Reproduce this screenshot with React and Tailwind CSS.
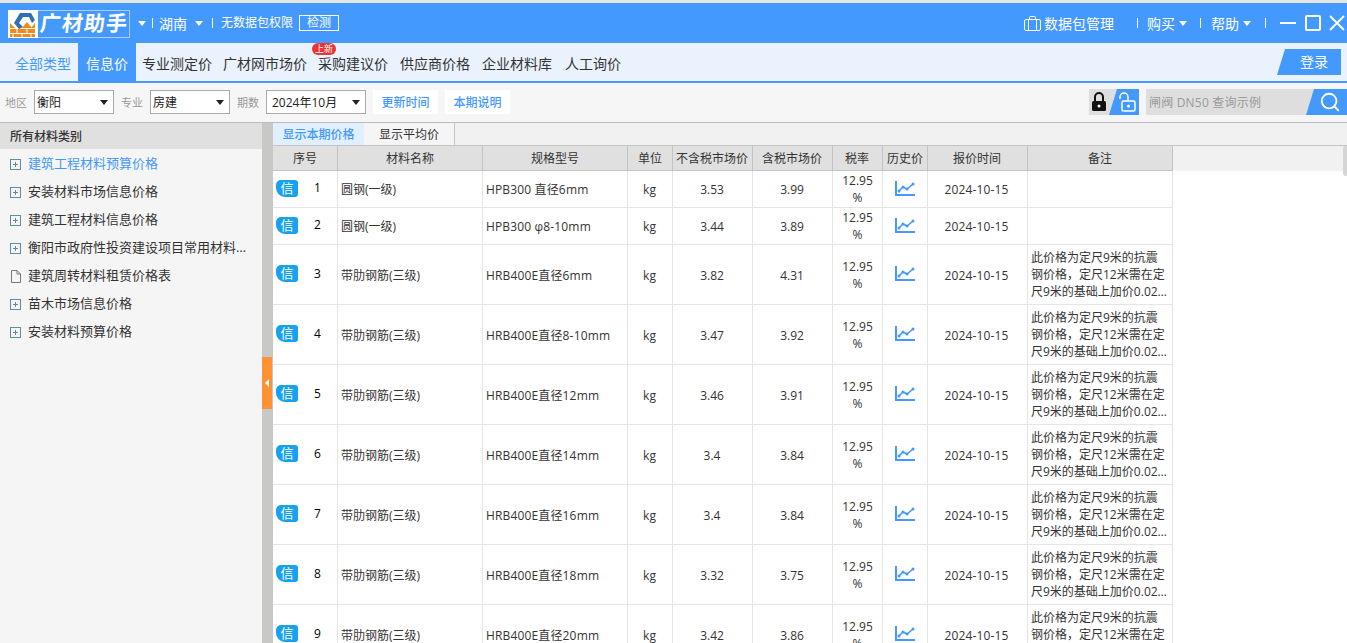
import { Search } from 'lucide-react';

const CATEGORIES = [
  { name: '建筑工程材料预算价格', active: true },
  { name: '安装材料市场信息价格' },
  { name: '建筑工程材料信息价格' },
  { name: '衡阳市政府性投资建设项目常用材料价格表' },
  { name: '建筑周转材料租赁价格表', file: true },
  { name: '苗木市场信息价格' },
  { name: '安装材料预算价格' },
];

const NAV = [
  { label: '专业测定价', gap: 'ml-[6px]' },
  { label: '广材网市场价', gap: 'ml-[11px]' },
  { label: '采购建议价', gap: 'ml-[11px]', isNew: true },
  { label: '供应商价格', gap: 'ml-[12px]' },
  { label: '企业材料库', gap: 'ml-[12px]' },
  { label: '人工询价', gap: 'ml-[13px]' },
];

const NOTE = '此价格为定尺9米的抗震钢价格，定尺12米需在定尺9米的基础上加价0.02元/公斤计算';

const ROWS = [
  { id: 1, name: '圆钢(一级)', spec: 'HPB300 直径6mm', ex: '3.53', inc: '3.99' },
  { id: 2, name: '圆钢(一级)', spec: 'HPB300 φ8-10mm', ex: '3.44', inc: '3.89' },
  { id: 3, name: '带肋钢筋(三级)', spec: 'HRB400E直径6mm', ex: '3.82', inc: '4.31', note: true },
  { id: 4, name: '带肋钢筋(三级)', spec: 'HRB400E直径8-10mm', ex: '3.47', inc: '3.92', note: true },
  { id: 5, name: '带肋钢筋(三级)', spec: 'HRB400E直径12mm', ex: '3.46', inc: '3.91', note: true },
  { id: 6, name: '带肋钢筋(三级)', spec: 'HRB400E直径14mm', ex: '3.4', inc: '3.84', note: true },
  { id: 7, name: '带肋钢筋(三级)', spec: 'HRB400E直径16mm', ex: '3.4', inc: '3.84', note: true },
  { id: 8, name: '带肋钢筋(三级)', spec: 'HRB400E直径18mm', ex: '3.32', inc: '3.75', note: true },
  { id: 9, name: '带肋钢筋(三级)', spec: 'HRB400E直径20mm', ex: '3.42', inc: '3.86', note: true },
];

const COLS = [
  ['序号', 'w-[65px]'],
  ['材料名称', 'w-[145px]'],
  ['规格型号', 'w-[145px]'],
  ['单位', 'w-[45px]'],
  ['不含税市场价', 'w-[80px] pr-px'],
  ['含税市场价', 'w-[80px] pr-px'],
  ['税率', 'w-[50px] pr-px'],
  ['历史价', 'w-[45px]'],
  ['报价时间', 'w-[100px] pr-px'],
  ['备注', 'w-[145px]'],
];

function Caret({ className = 'border-t-white' }) {
  return <span className={`block w-0 h-0 border-x-[4px] border-x-transparent border-t-[5px] ${className}`} />;
}

function Sep() {
  return <span className="block w-px h-[10px] bg-white" />;
}

function Logo() {
  return (
    <div className="flex h-[28px] ml-[8px] mt-px">
      <svg width="30" height="28" viewBox="0 0 30 28" className="bg-white">
        <path d="M12 3 H23 L27 10 L24 13 L21 7 H15 L11 13 L15 17 L11 19 L6 13 Z" fill="#2f6fb8" />
        <path d="M19 12 L24 18 H14 Z" fill="#f08a1d" />
        <path d="M2 13 L7 18 H2 Z M27 13 V18 H23 Z" fill="#f08a1d" />
        <path d="M2 19 H27 V23 H2 Z M2 24 H27 V27 H2 Z" fill="#f08a1d" />
        <path d="M9 19 V23 M19 19 V23 M14 24 V27 M5 24 V27 M23 24 V27" stroke="#fff" />
      </svg>
      <div className="w-[92px] border border-l-0 border-[#a9cdf5] flex items-center justify-center text-white">
        <span className="block text-[21px] font-bold tracking-[1px] leading-none -skew-x-6">广材助手</span>
      </div>
    </div>
  );
}

function TitleBar() {
  return (
    <div className="h-[40px] bg-[#4499ff] flex items-center text-white shrink-0">
      <Logo />
      <span className="ml-[8px]"><Caret /></span>
      <span className="ml-[6px]"><Sep /></span>
      <span className="ml-[6px] text-[14px]">湖南</span>
      <span className="ml-[8px]"><Caret /></span>
      <span className="ml-[9px]"><Sep /></span>
      <span className="ml-[8px] text-[12px]">无数据包权限</span>
      <span className="ml-[6px] w-[40px] h-[16px] border border-white text-[12px] leading-[14px] text-center">检测</span>
      <div className="flex-1" />
      <svg width="17" height="15" viewBox="0 0 17 15" fill="none" stroke="#fff" strokeWidth="1">
        <rect x="0.5" y="3.5" width="16" height="11" rx="1.5" />
        <path d="M4.5 3.5 V14.5 M12.5 3.5 V14.5 M5.5 3.5 V1.5 Q5.5 0.5 6.5 0.5 H10.5 Q11.5 0.5 11.5 1.5 V3.5" />
      </svg>
      <span className="ml-[3px] text-[14px]">数据包管理</span>
      <span className="ml-[23px]"><Sep /></span>
      <span className="ml-[9px] text-[14px]">购买</span>
      <span className="ml-[4px]"><Caret /></span>
      <span className="ml-[13px]"><Sep /></span>
      <span className="ml-[10px] text-[14px]">帮助</span>
      <span className="ml-[4px]"><Caret /></span>
      <span className="ml-[14px]"><Sep /></span>
      <span className="ml-[14px] w-[16px] h-[2px] bg-white" />
      <span className="ml-[9px] w-[16px] h-[16px] border-2 border-white rounded-[2px]" />
      <svg className="ml-[8px] mr-[2px]" width="16" height="16" viewBox="0 0 16 16" stroke="#fff" strokeWidth="1.8">
        <path d="M1 1 L15 15 M15 1 L1 15" />
      </svg>
    </div>
  );
}

function NavBar() {
  return (
    <div className="h-[40px] bg-[#eaf2fe] border-b-2 border-[#4499ff] flex text-[14px] leading-none text-[#333] shrink-0">
      <div className="w-[78px] flex items-center justify-end pr-[7px] pt-[3px] text-[#4499ff]">全部类型</div>
      <div className="w-[58px] flex items-center justify-center pt-[3px] bg-[#4499ff] text-white">信息价</div>
      {NAV.map(item => (
        <div key={item.label} className={`relative flex items-center pt-[3px] ${item.gap}`}>
          {item.label}
          {item.isNew && (
            <span className="absolute left-[-6px] top-0 w-[24px] h-[12px] rounded-full bg-[#ee3333] text-white text-[9px] leading-[12px] text-center">上新</span>
          )}
        </div>
      ))}
      <div className="flex-1" />
      <div className="w-[64px] h-[26px] mt-[6px] mr-[6px] bg-[#4499ff] text-white flex items-center justify-center pl-[10px] [clip-path:polygon(8px_0,100%_0,100%_100%,0_100%)]">
        登录
      </div>
    </div>
  );
}

function FakeSelect({ value, width }) {
  return (
    <div className={`${width} h-[24px] bg-white border border-[#aaaaaa] flex items-center justify-between pl-[2px] pr-[5px] text-[12px] text-[#222]`}>
      <span className="pt-px">{value}</span>
      <Caret className="border-t-[#222]" />
    </div>
  );
}

function FilterBar() {
  return (
    <div className="h-[40px] pb-px bg-[#f6f6f6] border-b border-[#bbbbbb] flex items-center text-[11px] text-[#999] shrink-0">
      <span className="ml-[5px] w-[29px] pt-[2px]">地区</span>
      <FakeSelect value="衡阳" width="w-[80px]" />
      <span className="ml-[7px] w-[29px] pt-[2px]">专业</span>
      <FakeSelect value="房建" width="w-[80px]" />
      <span className="ml-[7px] w-[29px] pt-[2px]">期数</span>
      <FakeSelect value={<span className="pl-[3px]">2024年10月</span>} width="w-[100px]" />
      <button className="ml-[7px] w-[65px] h-[24px] pt-[2px] bg-white text-[#4499ff] text-[12px] font-medium">更新时间</button>
      <button className="ml-[7px] w-[65px] h-[24px] pt-[2px] bg-white text-[#4499ff] text-[12px] font-medium">本期说明</button>
      <div className="flex-1" />
      <div className="w-[50px] h-[26px] bg-[#dedede] flex">
        <div className="w-[20px] flex items-center justify-center">
          <svg width="16" height="20" viewBox="0 0 16 20">
            <path d="M4 9 V5 a4 4 0 0 1 8 0 V9" fill="none" stroke="#111" strokeWidth="2" />
            <rect x="1" y="9" width="14" height="10" rx="1.5" fill="#111" />
            <circle cx="8" cy="14" r="1.5" fill="#fff" />
          </svg>
        </div>
        <div className="flex-1 bg-[#4499ff] flex items-center justify-center pl-[6px] [clip-path:polygon(8px_0,100%_0,100%_100%,0_100%)]">
          <svg width="18" height="20" viewBox="0 0 18 20">
            <path d="M2 7 V5 a4 4 0 0 1 8 0 V9" fill="none" stroke="#fff" strokeWidth="1.5" />
            <rect x="4" y="9" width="13" height="10" rx="1.5" fill="none" stroke="#fff" strokeWidth="1.5" />
            <circle cx="10.5" cy="14" r="1.5" fill="#fff" />
          </svg>
        </div>
      </div>
      <div className="ml-[7px] w-[201px] h-[26px] bg-[#dedede] flex items-center">
        <span className="flex-1 pl-[3px] pt-[2px] text-[12px] tracking-[0.2px] text-[#999]">闸阀 DN50 查询示例</span>
        <div className="w-[41px] h-full bg-[#4499ff] flex items-center justify-center pl-[7px] [clip-path:polygon(8px_0,100%_0,100%_100%,0_100%)]">
          <Search size={22} color="#fff" strokeWidth={2} />
        </div>
      </div>
    </div>
  );
}

function Sidebar() {
  return (
    <div className="w-[262px] bg-[#f5f5f5] shrink-0">
      <div className="h-[26px] pt-[2px] bg-[#e0e0e0] flex items-center pl-[10px] text-[12px] font-medium text-[#333]">所有材料类别</div>
      <div className="pt-px">
        {CATEGORIES.map(c => (
          <div key={c.name} className={`h-[28px] flex items-center pl-[10px] text-[13px] leading-[20px] ${c.active ? 'text-[#4499ff]' : 'text-[#333]'}`}>
            {c.file ? (
              <svg width="11" height="13" viewBox="0 0 11 13" fill="none" stroke="#777">
                <path d="M1.5 0.5 H7 L10.5 4 V12.5 H1.5 Z M7 0.5 V4 H10.5" />
              </svg>
            ) : (
              <svg width="11" height="11" viewBox="0 0 11 11" fill="none" stroke="#5f8ba3">
                <rect x="0.5" y="0.5" width="10" height="10" />
                <path d="M3 5.5 H8 M5.5 3 V8" />
              </svg>
            )}
            <span className="ml-[7px] -mt-[2px] w-[222px] truncate">{c.name}</span>
          </div>
        ))}
      </div>
    </div>
  );
}

function Gutter() {
  return (
    <div className="w-[11px] bg-[#c8c8c6] flex items-center shrink-0">
      <div className="w-[10px] h-[52px] bg-[#ff9233] flex items-center justify-center">
        <span className="w-0 h-0 border-y-[4px] border-y-transparent border-r-[4px] border-r-white" />
      </div>
    </div>
  );
}

function TrendIcon() {
  return (
    <svg width="20" height="15" viewBox="0 0 20 15" fill="none" stroke="#4499ff" className="mx-auto -translate-y-px">
      <path d="M1 0 V14 H20" strokeWidth="2" />
      <path d="M4 10 L8 6 L12 8 L18 3" strokeWidth="1.5" />
      <g fill="#4499ff" stroke="none">
        <circle cx="4" cy="10" r="1.5" />
        <circle cx="8" cy="6" r="1.5" />
        <circle cx="12" cy="8" r="1.5" />
        <circle cx="18" cy="3" r="1.5" />
      </g>
    </svg>
  );
}

function PriceTable() {
  return (
    <table className="table-fixed border-separate border-spacing-0 w-[900px] text-[12px] text-[#333] bg-white">
      <thead>
        <tr className="h-[25px]">
          {COLS.map(([title, w]) => (
            <th key={title} className={`${w} pt-px bg-[#e0e0e0] border-r border-b border-[#c4c4c4] font-normal whitespace-nowrap overflow-hidden`}>{title}</th>
          ))}
        </tr>
      </thead>
      <tbody>
        {ROWS.map(r => (
          <tr key={r.id} className={r.note ? 'h-[60px]' : 'h-[37px]'}>
            <td className="border-r border-b border-[#e5e5e5] pl-[3px]">
              <div className="flex items-center -translate-y-px">
                <span className="w-[22px] h-[17px] bg-[#17a1ee] text-white text-[13px] leading-[17px] text-center rounded-tl-[5px] rounded-bl-[9px] rounded-br-[3px] rounded-tr-[3px]">信</span>
                <span className="flex-1 text-center text-black">{r.id}</span>
              </div>
            </td>
            <td className="border-r border-b border-[#e5e5e5] pl-[3px] pt-[2px]">{r.name}</td>
            <td className="border-r border-b border-[#e5e5e5] pl-[3px] pt-[2px] whitespace-nowrap tracking-[0.15px]">{r.spec}</td>
            <td className="border-r border-b border-[#e5e5e5] text-center pr-px pt-[2px]">kg</td>
            <td className="border-r border-b border-[#e5e5e5] text-center pr-px pt-[2px]">{r.ex}</td>
            <td className="border-r border-b border-[#e5e5e5] text-center pr-px pt-[2px]">{r.inc}</td>
            <td className="border-r border-b border-[#e5e5e5] text-center px-[6px] leading-[17px]">12.95<wbr />%</td>
            <td className="border-r border-b border-[#e5e5e5]"><TrendIcon /></td>
            <td className="border-r border-b border-[#e5e5e5] text-center pr-[2px] pt-[2px] tracking-[0.15px]">2024-10-15</td>
            <td className="border-r border-b border-[#e5e5e5] pl-[3px] pr-[4px] leading-[17px]">
              {r.note && <div className="line-clamp-3 break-all">{NOTE}</div>}
            </td>
          </tr>
        ))}
      </tbody>
    </table>
  );
}

export default function App() {
  return (
    <div className="w-full h-[643px] overflow-hidden flex flex-col bg-white font-['Open_Sans','Noto_Sans_CJK_SC',sans-serif]">
      <div className="h-[3px] bg-[#e6e6e6] shrink-0" />
      <TitleBar />
      <NavBar />
      <FilterBar />
      <div className="flex-1 flex min-h-0">
        <Sidebar />
        <Gutter />
        <div className="flex-1 min-w-0 flex flex-col">
          <div className="h-[23px] bg-[#f1f1f1] border-b border-[#c4c4c4] flex text-[12px] shrink-0">
            <div className="w-[91px] pt-[2px] bg-[#e1efff] text-[#4499ff] flex items-center justify-center font-medium">显示本期价格</div>
            <div className="w-[91px] pt-[2px] bg-[#f5f5f5] border-r border-[#c4c4c4] text-[#333] flex items-center justify-center">显示平均价</div>
          </div>
          <div className="flex-1 min-h-0 overflow-hidden relative">
            <div className="h-[25px] absolute inset-x-0 top-0 bg-[#f1f1f1]" />
            <div className="absolute right-0 top-0 w-[4px] h-[30px] bg-[#d5d5d5] rounded-l-[3px]" />
            <div className="relative"><PriceTable /></div>
          </div>
        </div>
      </div>
    </div>
  );
}
